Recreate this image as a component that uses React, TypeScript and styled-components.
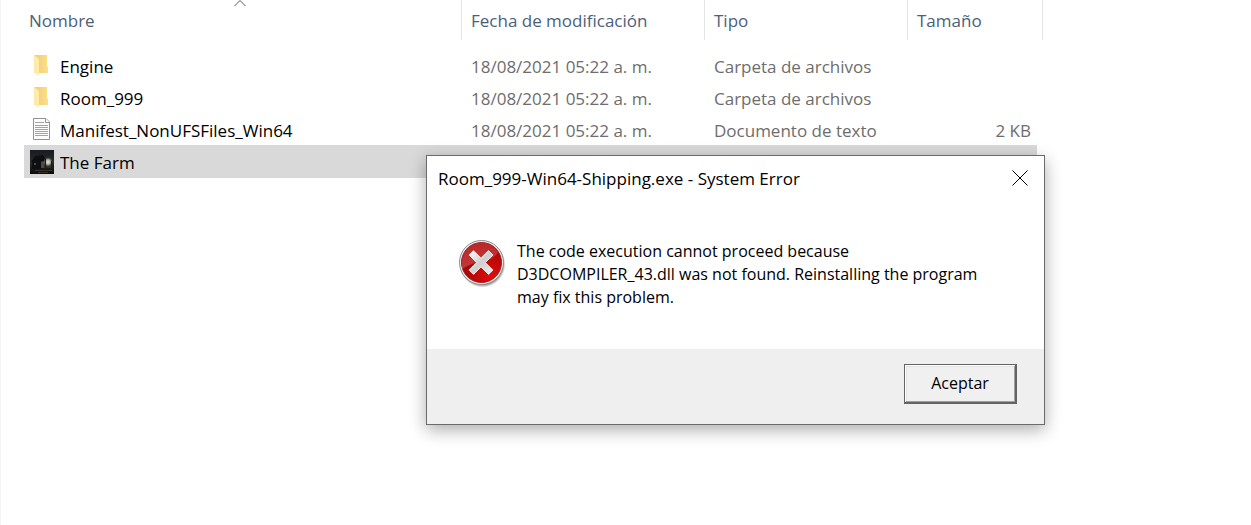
import React from "react";
import styled, { createGlobalStyle } from "styled-components";

const GlobalStyle = createGlobalStyle`
  *, *::before, *::after { box-sizing: border-box; }
  body {
    margin: 0;
    background: #fff;
    color: #000;
    font-family: "Open Sans", "Noto Sans", sans-serif;
    font-size: 17px;
    line-height: 23px;
  }
`;

const Explorer = styled.main`
  position: relative;
  min-height: 100vh;
  padding-left: 23px;
  border-left: 1px solid #f5f5f5;
  overflow: hidden;
`;

const FileTable = styled.table`
  table-layout: fixed;
  width: 1019px;
  border-collapse: separate;
  border-spacing: 0;
`;

const HeaderCell = styled.th<{ $first?: boolean }>`
  position: relative;
  height: 40px;
  padding: 0 0 0 ${(p) => (p.$first ? 5 : 9)}px;
  border-right: 1px solid #e5e5e5;
  color: #4c607a;
  font-weight: 400;
  text-align: left;
`;

const SortArrow = styled.svg`
  position: absolute;
  top: 0;
  left: 210px;
`;

const Body = styled.tbody`
  &::before {
    content: "";
    display: table-row;
    height: 10px;
  }
`;

const Row = styled.tr<{ $selected?: boolean }>`
  td {
    background: ${(p) => (p.$selected ? "#d9d9d9" : "transparent")};
    box-shadow: ${(p) => (p.$selected ? "0 -1px 0 #d9d9d9" : "none")};
  }
`;

const Cell = styled.td<{ $align?: "right" }>`
  height: 32px;
  padding: 0 6px 0 9px;
  color: #6d6d6d;
  text-align: ${(p) => p.$align ?? "left"};
  white-space: nowrap;
`;

const NameCell = styled(Cell)`
  padding-left: 6px;
  color: #000;
`;

const FileName = styled.span`
  display: flex;
  align-items: center;
  gap: 6px;
`;

const Dialog = styled.section`
  position: absolute;
  top: 155px;
  left: 425px;
  width: 619px;
  border: 1px solid #6b6b6b;
  background: #fff;
  box-shadow: 0 5px 16px rgba(0, 0, 0, 0.32);
`;

const TitleBar = styled.header`
  display: flex;
  align-items: center;
  justify-content: space-between;
  height: 44px;
  padding-left: 11px;
`;

const Title = styled.h1`
  margin: 0;
  font-size: 17px;
  font-weight: 400;
`;

const CloseButton = styled.button`
  display: grid;
  place-items: center;
  width: 48px;
  height: 44px;
  padding: 0;
  border: 0;
  background: transparent;
`;

const Message = styled.div`
  display: flex;
  gap: 11px;
  padding: 40px 32px 40px 31px;
`;

const MessageText = styled.p`
  max-width: 480px;
  margin: 0;
  font-size: 16px;
`;

const Footer = styled.footer`
  display: flex;
  justify-content: flex-end;
  padding: 15px 27px 20px;
  background: #efefef;
`;

const AcceptButton = styled.button`
  width: 113px;
  height: 40px;
  padding: 0;
  border: solid #646464;
  border-width: 1px 2px 2px 1px;
  background: #f0f0f0;
  box-shadow: inset 1px 1px 0 #fff, inset -1px -1px 0 #a0a0a0, inset 2px 2px 0 #e3e3e3;
  color: #000;
  font: inherit;
  font-size: 16px;
`;

const FolderIcon = () => (
  <svg width="24" height="24" viewBox="0 0 24 24" aria-hidden="true">
    <defs>
      <linearGradient id="folderBack" x1="0" x2="1">
        <stop offset="0" stopColor="#efcb6e" />
        <stop offset="1" stopColor="#fddf8a" />
      </linearGradient>
      <linearGradient id="folderFront" x1="0" x2="1">
        <stop offset="0" stopColor="#ffe9a4" />
        <stop offset="1" stopColor="#ffedb5" />
      </linearGradient>
    </defs>
    <path d="M4 1H17V12L18 13V19H8Z" fill="url(#folderBack)" />
    <path d="M4 1L8 4Q9 5 9 7V22L5 19.500Q4 19 4 18Z" fill="url(#folderFront)" />
  </svg>
);

const TextIcon = () => (
  <svg width="24" height="24" viewBox="0 0 24 24" aria-hidden="true">
    <path d="M3.500 .5H16L19.500 4V21.500H3.500Z" fill="#fcfcfc" stroke="#929292" />
    <path d="M15.500 .5V4.500H19.500" fill="#fff" stroke="#929292" />
    <path
      d="M5 4.500H14M5 7.500H18M5 9.500H18M5 11.500H18M5 13.500H18M5 15.500H18M5 17.500H18"
      stroke="#a3a3a3"
    />
  </svg>
);

const FarmIcon = () => (
  <svg width="24" height="24" viewBox="0 0 24 24" aria-hidden="true">
    <defs>
      <linearGradient id="nightSky" x2="0" y2="1">
        <stop offset="0" stopColor="#171a22" />
        <stop offset="0.5" stopColor="#2a2b29" />
        <stop offset="1" stopColor="#0c0b0a" />
      </linearGradient>
      <radialGradient id="lamp">
        <stop offset="0" stopColor="#efebdd" />
        <stop offset="0.5" stopColor="#a8a495" />
        <stop offset="1" stopColor="#4d4b43" stopOpacity="0" />
      </radialGradient>
    </defs>
    <path fill="url(#nightSky)" d="M0 0H24V24H0Z" />
    <path fill="#2e2f2d" d="M10 12H21V18H10Z" />
    <path fill="#0e0f11" d="M1 12L5 6L13 5L17 11H11V19H2V12Z" />
    <path fill="#4b4a44" d="M11 12H14V18H11ZM4 13H6V15H4Z" />
    <circle cx="18" cy="12" r="5" fill="url(#lamp)" />
    <path stroke="#36322c" d="M5 20.500H22M8 22.500H18" />
    <path stroke="#1b1c1c" d="M15.500 9V19M21.500 11V17" />
  </svg>
);

const ErrorIcon = () => (
  <svg width="48" height="48" viewBox="0 0 48 48" role="img" aria-label="Error">
    <defs>
      <radialGradient id="redDisc" cx="0.75" cy="0.85" r="0.9">
        <stop offset="0" stopColor="#e40c0c" />
        <stop offset="0.5" stopColor="#bb0808" />
        <stop offset="1" stopColor="#8f0b0c" />
      </radialGradient>
      <linearGradient id="gloss" x2="0" y2="1">
        <stop offset="0" stopColor="#d43c3c" />
        <stop offset="1" stopColor="#d25a5a" />
      </linearGradient>
      <linearGradient id="cross" x2="1" y2="1">
        <stop offset="0" stopColor="#fff" />
        <stop offset="0.5" stopColor="#cfcfcf" />
        <stop offset="1" stopColor="#f0f0f0" />
      </linearGradient>
      <radialGradient id="discShadow">
        <stop offset="0.85" stopColor="#000" stopOpacity="0.5" />
        <stop offset="1" stopColor="#000" stopOpacity="0" />
      </radialGradient>
    </defs>
    <circle cx="24.500" cy="24.500" r="23" fill="url(#discShadow)" />
    <circle cx="23.500" cy="22.500" r="22" fill="#f2f2f2" stroke="#8b8b8b" />
    <circle cx="23.500" cy="22.500" r="20" fill="url(#redDisc)" stroke="#9c2020" />
    <path d="M4 24A19.500 19.500 0 0 1 40 12Q37 19 25 21Q13 23 4 29Z" fill="url(#gloss)" opacity="0.6" />
    <path
      d="M15.500 10.500L23 18L30.500 10.500L35 15L27.500 22.500L35 30L30.500 34.500L23 27L15.500 34.500L11 30L18.500 22.500L11 15Z"
      fill="url(#cross)"
      stroke="#e9e0e0"
      strokeLinejoin="round"
    />
  </svg>
);

const files = [
  { name: "Engine", icon: <FolderIcon />, date: "18/08/2021 05:22 a. m.", type: "Carpeta de archivos" },
  { name: "Room_999", icon: <FolderIcon />, date: "18/08/2021 05:22 a. m.", type: "Carpeta de archivos" },
  {
    name: "Manifest_NonUFSFiles_Win64",
    icon: <TextIcon />,
    date: "18/08/2021 05:22 a. m.",
    type: "Documento de texto",
    size: "2 KB",
  },
  { name: "The Farm", icon: <FarmIcon />, selected: true },
];

export default function App() {
  return (
    <>
      <GlobalStyle />
      <Explorer>
        <FileTable>
          <colgroup>
            <col style={{ width: 438 }} />
            <col style={{ width: 243 }} />
            <col style={{ width: 203 }} />
            <col style={{ width: 129 }} />
            <col style={{ width: 6 }} />
          </colgroup>
          <thead>
            <tr>
              <HeaderCell $first scope="col" aria-sort="ascending">
                <SortArrow width="12" height="7" aria-hidden="true">
                  <path d="M.5 6L6 .5L11.500 6" fill="none" stroke="#5a5a5a" />
                </SortArrow>
                Nombre
              </HeaderCell>
              <HeaderCell scope="col">Fecha de modificación</HeaderCell>
              <HeaderCell scope="col">Tipo</HeaderCell>
              <HeaderCell scope="col" colSpan={2}>Tamaño</HeaderCell>
            </tr>
          </thead>
          <Body>
            {files.map((file) => (
              <Row key={file.name} $selected={file.selected} aria-selected={file.selected}>
                <NameCell>
                  <FileName>
                    {file.icon}
                    {file.name}
                  </FileName>
                </NameCell>
                <Cell>{file.date}</Cell>
                <Cell>{file.type}</Cell>
                <Cell $align="right">{file.size}</Cell>
              </Row>
            ))}
          </Body>
        </FileTable>

        <Dialog role="alertdialog" aria-labelledby="dialog-title" aria-describedby="dialog-text">
          <TitleBar>
            <Title id="dialog-title">Room_999-Win64-Shipping.exe - System Error</Title>
            <CloseButton type="button" aria-label="Cerrar">
              <svg width="16" height="16" aria-hidden="true">
                <path d="M.5 .5L15.500 15.500M15.500 .5L.5 15.500" stroke="#000" />
              </svg>
            </CloseButton>
          </TitleBar>
          <Message>
            <ErrorIcon />
            <MessageText id="dialog-text">
              The code execution cannot proceed because D3DCOMPILER_43.dll was not found. Reinstalling the program
              may fix this problem.
            </MessageText>
          </Message>
          <Footer>
            <AcceptButton type="button">Aceptar</AcceptButton>
          </Footer>
        </Dialog>
      </Explorer>
    </>
  );
}
